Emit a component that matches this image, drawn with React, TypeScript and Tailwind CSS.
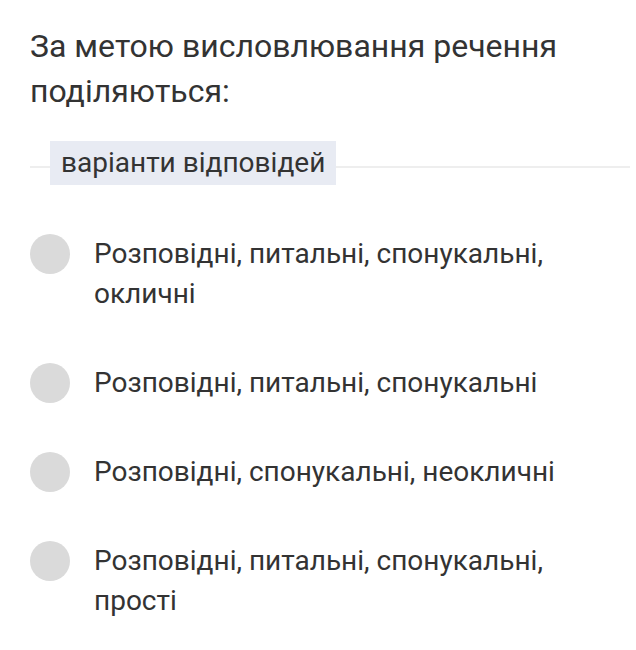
const options = [
  "Розповідні, питальні, спонукальні, окличні",
  "Розповідні, питальні, спонукальні",
  "Розповідні, спонукальні, неокличні",
  "Розповідні, питальні, спонукальні, прості",
];

export default function App() {
  return (
    <div
      className="w-[636px] h-[650px] bg-white text-[#333333] pl-[30px] pr-[6px] pt-[24px]"
      style={{ fontFamily: "Roboto, 'Noto Sans', sans-serif" }}
    >
      <div className="text-[32px] leading-[45px] pr-[20px]">
        За метою висловлювання речення поділяються:
      </div>

      <div className="relative mt-[27px] h-[44px] flex items-center">
        <div className="absolute left-0 right-0 top-[25px] h-[2px] bg-[#eeeeee]" />
        <div className="relative ml-[20px] h-[44px] px-[11px] flex items-center bg-[#e8ebf3] text-[28px]">
          варіанти відповідей
        </div>
      </div>

      <div className="mt-[49px] flex flex-col gap-[49px]">
        {options.map((o) => (
          <div key={o} className="flex items-start">
            <div className="w-[40px] h-[40px] rounded-full bg-[#dadada] shrink-0" />
            <div className="ml-[24px] text-[28px] leading-[40px] w-[480px]">{o}</div>
          </div>
        ))}
      </div>
    </div>
  );
}
